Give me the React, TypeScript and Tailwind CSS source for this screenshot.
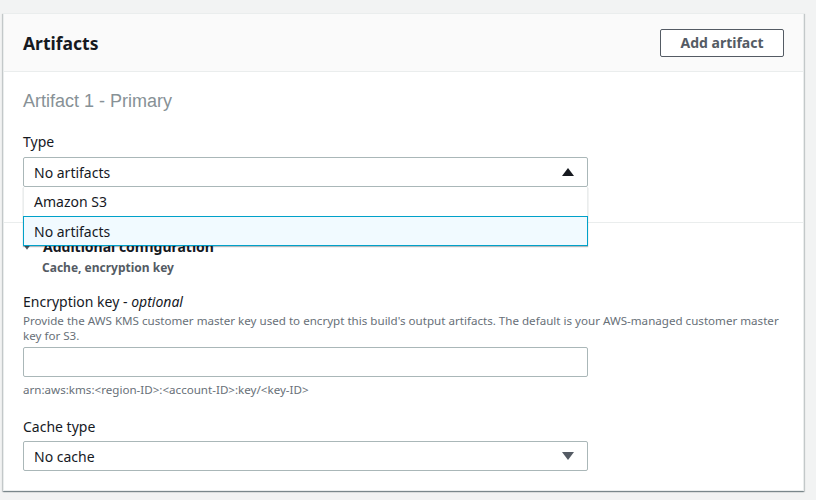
import React from "react";

const font = { fontFamily: '"Noto Sans", "Open Sans", sans-serif' };

function Caret({ up, className }: { up?: boolean; className?: string }) {
  return (
    <svg width="12" height="8" viewBox="0 0 12 8" className={className}>
      {up ? (
        <path d="M6 0 L12 8 L0 8 Z" fill="currentColor" />
      ) : (
        <path d="M0 0 L12 0 L6 8 Z" fill="currentColor" />
      )}
    </svg>
  );
}

export default function App() {
  return (
    <div
      className="h-[500px] w-[816px] bg-[#f2f3f3] pl-[3px] pt-[13px] text-[#16191f]"
      style={font}
    >
      <div className="w-[801px] border border-[#eaeded] bg-white shadow-[0_1px_1px_0_rgba(0,28,36,0.3),1px_1px_1px_0_rgba(0,28,36,0.15),-1px_1px_1px_0_rgba(0,28,36,0.15)]">
        {/* header */}
        <div className="flex h-[58px] items-center justify-between border-b border-[#eaeded] bg-[#fafafa] pl-[19px] pr-[19px]">
          <h2 className="text-[17.5px] font-bold leading-[22px]">Artifacts</h2>
          <button className="h-[28px] w-[124px] rounded-[2px] border border-[#545b64] bg-white text-[14px] font-bold text-[#545b64]">
            Add artifact
          </button>
        </div>

        {/* primary artifact */}
        <div className="border-b border-[#eaeded] px-[19px] pb-[35px] pt-[18px]">
          <h3
            className="text-[18px] leading-[22px] text-[#879196]"
            style={{ fontFamily: '"Liberation Sans", Arial, sans-serif' }}
          >
            Artifact 1 - Primary
          </h3>
          <label className="mt-[19px] block text-[14px] leading-[22px]">Type</label>
          <div className="relative mt-[4px] w-[565px]">
            <div className="flex h-[30px] items-center justify-between rounded-[2px] border border-[#aab7b8] pl-[10px] pr-[13px] text-[14px]">
              <span>No artifacts</span>
              <Caret up className="text-[#16191f]" />
            </div>
            <div className="absolute left-0 top-full z-10 w-[565px] border-x border-[#eaeded] bg-white shadow-[0_1px_1px_0_rgba(0,28,36,0.3)]">
              <div className="flex h-[29px] items-center px-[10px] text-[14px]">Amazon S3</div>
              <div className="-mx-px flex h-[30px] items-center border border-[#00a1c9] bg-[#f1faff] px-[10px] text-[14px]">
                No artifacts
              </div>
            </div>
          </div>
        </div>

        {/* additional configuration */}
        <div className="px-[19px] pb-[19px] pt-[14px]">
          <div className="flex items-center gap-[12px]">
            <Caret className="h-[6px] w-[8px] text-[#545b64]" />
            <span className="text-[14px] font-bold leading-[20px]">Additional configuration</span>
          </div>
          <p className="ml-[19px] mt-[3px] text-[12px] font-bold leading-[16px] text-[#545b64]">
            Cache, encryption key
          </p>

          <label className="mt-[15px] block text-[14px] leading-[22px]">
            Encryption key - <i>optional</i>
          </label>
          <p className="text-[11.6px] leading-[15px] text-[#687078]">
            Provide the AWS KMS customer master key used to encrypt this build's output artifacts. The default is your AWS-managed customer master key for S3.
          </p>
          <input
            className="mt-[4px] block h-[30px] w-[565px] rounded-[2px] border border-[#aab7b8] px-[10px] text-[14px] outline-none"
            type="text"
          />
          <p className="mt-[5px] text-[11.6px] leading-[16px] text-[#687078]">
            arn:aws:kms:&lt;region-ID&gt;:&lt;account-ID&gt;:key/&lt;key-ID&gt;
          </p>

          <label className="mt-[18px] block text-[14px] leading-[22px]">Cache type</label>
          <div className="mt-[3px] flex h-[30px] w-[565px] items-center justify-between rounded-[2px] border border-[#aab7b8] pl-[10px] pr-[13px] text-[14px]">
            <span>No cache</span>
            <Caret className="text-[#545b64]" />
          </div>
        </div>
      </div>
    </div>
  );
}
